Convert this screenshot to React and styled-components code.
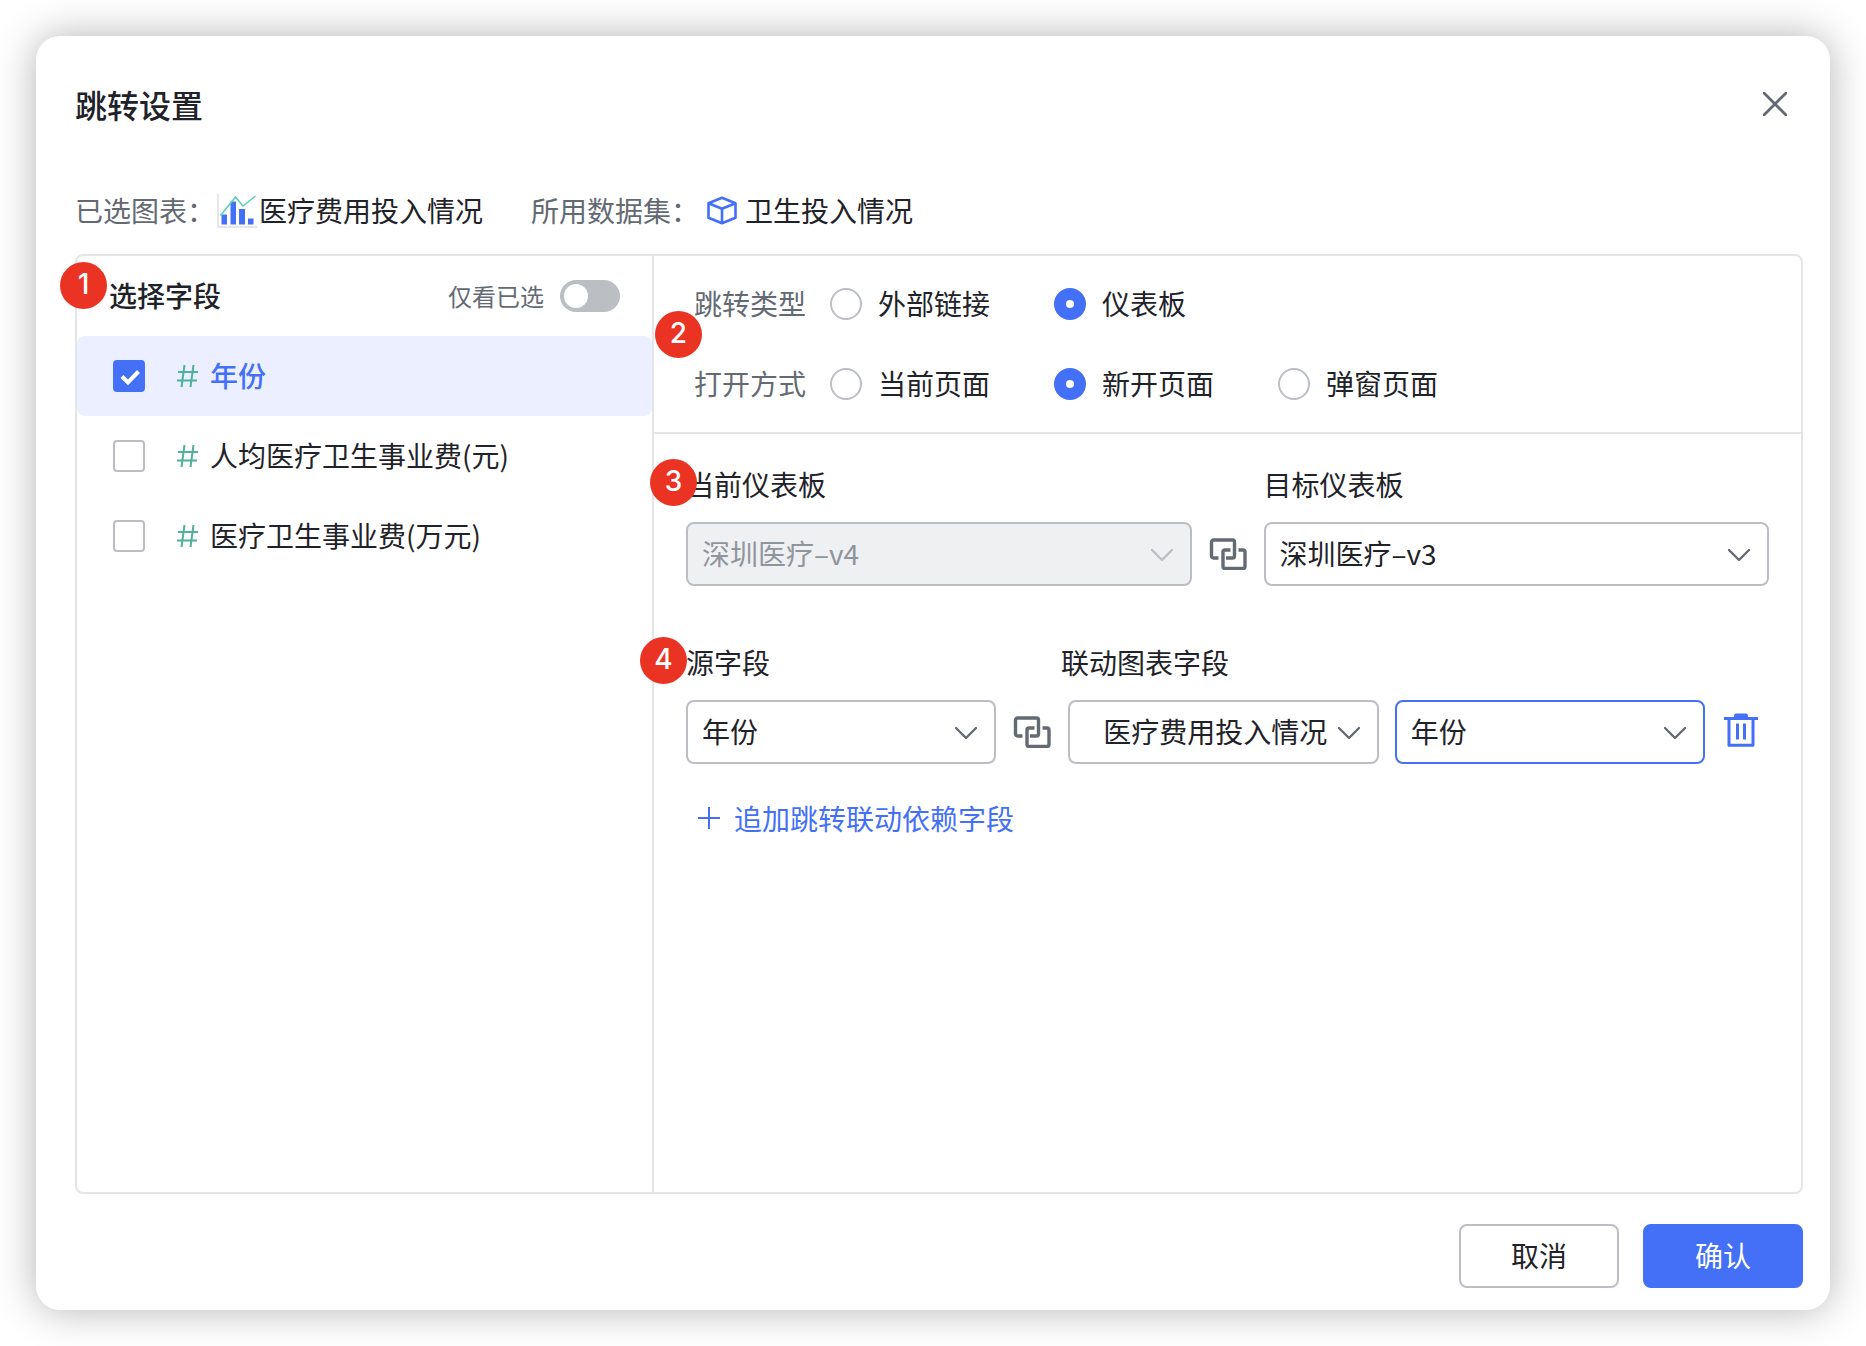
import React, { useState } from "react";
import styled, { createGlobalStyle } from "styled-components";

const fields = [
  { id: "year", name: "年份" },
  { id: "per-capita", name: "人均医疗卫生事业费(元)" },
  { id: "total", name: "医疗卫生事业费(万元)" },
];

const jumpTypes = [
  { value: "outer", label: "外部链接" },
  { value: "inner", label: "仪表板" },
];

const openModes = [
  { value: "self", label: "当前页面" },
  { value: "blank", label: "新开页面" },
  { value: "popup", label: "弹窗页面" },
];

export default function App() {
  const [checked, setChecked] = useState(["year"]);
  const [onlyChecked, setOnlyChecked] = useState(false);
  const [jumpType, setJumpType] = useState("inner");
  const [openMode, setOpenMode] = useState("blank");

  const toggleField = (id) => {
    setChecked(
      checked.includes(id) ? checked.filter((c) => c !== id) : [...checked, id]
    );
  };

  const shown = onlyChecked
    ? fields.filter((f) => checked.includes(f.id))
    : fields;

  return (
    <>
      <GlobalStyle />
      <Page>
        <Dialog role="dialog" aria-labelledby="dialog-title">
          <Header>
            <Title id="dialog-title">跳转设置</Title>
            <CloseButton type="button" aria-label="关闭">
              <CloseIcon />
            </CloseButton>
          </Header>

          <Info>
            <InfoItem>
              <InfoLabel>已选图表：</InfoLabel>
              <ChartIcon />
              <span>医疗费用投入情况</span>
            </InfoItem>
            <InfoItem $gap={7}>
              <InfoLabel>所用数据集：</InfoLabel>
              <CubeIcon />
              <span>卫生投入情况</span>
            </InfoItem>
          </Info>

          <Panel>
            <FieldColumn>
              <Badge $left={-17} $top={6}>1</Badge>
              <FieldHeader>
                <FieldTitle>选择字段</FieldTitle>
                <SwitchLabel>
                  仅看已选
                  <Switch
                    type="checkbox"
                    role="switch"
                    checked={onlyChecked}
                    onChange={() => setOnlyChecked(!onlyChecked)}
                  />
                </SwitchLabel>
              </FieldHeader>
              {shown.map((f) => (
                <FieldRow key={f.id} $active={checked.includes(f.id)}>
                  <CheckWrap>
                    <Checkbox
                      type="checkbox"
                      checked={checked.includes(f.id)}
                      onChange={() => toggleField(f.id)}
                    />
                    {checked.includes(f.id) && <CheckIcon />}
                  </CheckWrap>
                  <HashIcon />
                  <Text>{f.name}</Text>
                </FieldRow>
              ))}
            </FieldColumn>

            <Settings>
              <RadioSection>
                <Badge $left={1} $top={55}>2</Badge>
                <RadioRow role="radiogroup" aria-label="跳转类型">
                  <RadioTitle>跳转类型</RadioTitle>
                  {jumpTypes.map((t) => (
                    <RadioLabel key={t.value}>
                      <Radio
                        type="radio"
                        name="jumpType"
                        checked={jumpType === t.value}
                        onChange={() => setJumpType(t.value)}
                      />
                      <Text>{t.label}</Text>
                    </RadioLabel>
                  ))}
                </RadioRow>
                <RadioRow role="radiogroup" aria-label="打开方式">
                  <RadioTitle>打开方式</RadioTitle>
                  {openModes.map((m) => (
                    <RadioLabel key={m.value}>
                      <Radio
                        type="radio"
                        name="openMode"
                        checked={openMode === m.value}
                        onChange={() => setOpenMode(m.value)}
                      />
                      <Text>{m.label}</Text>
                    </RadioLabel>
                  ))}
                </RadioRow>
              </RadioSection>

              <Mapping>
                <Badge $left={-4} $top={25}>3</Badge>
                <MapRow>
                  <Field>
                    <Label htmlFor="current">当前仪表板</Label>
                    <Select id="current" options={["深圳医疗–v4"]} disabled />
                  </Field>
                  <LinkSlot>
                    <LinkIcon />
                  </LinkSlot>
                  <Field>
                    <Label htmlFor="target">目标仪表板</Label>
                    <Select id="target" options={["深圳医疗–v3"]} />
                  </Field>
                </MapRow>
              </Mapping>

              <Mapping>
                <Badge $left={-14} $top={51}>4</Badge>
                <LabelRow>
                  <Label htmlFor="source">源字段</Label>
                  <Label htmlFor="chart">联动图表字段</Label>
                </LabelRow>
                <MapRow>
                  <Field>
                    <Select id="source" options={["年份"]} />
                  </Field>
                  <LinkSlot>
                    <LinkIcon />
                  </LinkSlot>
                  <Field>
                    <Select id="chart" options={["医疗费用投入情况"]} indent />
                  </Field>
                  <Spacer />
                  <Field>
                    <Select
                      id="chart-field"
                      aria-label="联动字段"
                      options={["年份"]}
                      active
                    />
                  </Field>
                  <DeleteButton type="button" aria-label="删除">
                    <TrashIcon />
                  </DeleteButton>
                </MapRow>
                <AddButton type="button">
                  <PlusIcon />
                  追加跳转联动依赖字段
                </AddButton>
              </Mapping>
            </Settings>
          </Panel>

          <Footer>
            <Button type="button">取消</Button>
            <Button type="button" $primary>
              确认
            </Button>
          </Footer>
        </Dialog>
      </Page>
    </>
  );
}

function Select({ options, indent, active, ...rest }) {
  return (
    <SelectWrap>
      <StyledSelect $indent={indent} $active={active} {...rest}>
        {options.map((o) => (
          <option key={o}>{o}</option>
        ))}
      </StyledSelect>
      <Chevron viewBox="0 0 22 12" $disabled={rest.disabled}>
        <path d="M1 1l10 10L21 1" />
      </Chevron>
    </SelectWrap>
  );
}

/// Icons ///
const CloseIcon = () => (
  <svg width="24" height="24" viewBox="0 0 24 24" fill="none">
    <path
      d="M1 1l22 22M23 1L1 23"
      stroke="#646a73"
      strokeWidth="2.8"
      strokeLinecap="round"
    />
  </svg>
);

const ChartIcon = () => (
  <svg width="40" height="36" viewBox="0 0 40 36" fill="none">
    <path d="M1 2v33h39" stroke="#dee0e3" strokeWidth="1.6" />
    <path
      d="M4.500 22.500h5.500v10h-5.500zM13.500 9.500h5.500v23h-5.500zM22 17h6v15.500h-6zM31 26.500h5.500v6h-5.500z"
      fill="#4370f6"
    />
    <path
      d="M3.500 23.500L18.500 5l7.500 9L38.500 4"
      stroke="#5ad0b2"
      strokeWidth="1.6"
    />
  </svg>
);

const CubeIcon = () => (
  <svg width="32" height="30" viewBox="-1 -1 32 30" fill="none">
    <path
      d="M15 1.700l13.500 5.500v14.500L15 27.300 1.500 21.700V7.200zM1.500 7.200L15 12.800l13.500-5.600M15 12.800v14.500"
      stroke="#4370f6"
      strokeWidth="2.600"
      strokeLinejoin="round"
    />
  </svg>
);

const HashIcon = () => (
  <svg width="22" height="24" viewBox="0 0 22 24" fill="none">
    <path
      d="M8.500 1L5.500 23M17.500 1L14.500 23M2 8h20M1 16.500h20"
      stroke="#4fb09c"
      strokeWidth="2"
    />
  </svg>
);

const CheckIcon = () => (
  <svg width="32" height="32" viewBox="0 0 32 32" fill="none">
    <path d="M9 16.500l6 6L25.500 11.500" stroke="#fff" strokeWidth="4" />
  </svg>
);

const LinkIcon = () => (
  <svg width="38" height="32" viewBox="0 0 38 32" fill="none">
    <g stroke="#646a73" strokeWidth="3.4" strokeLinejoin="round">
      <path d="M9.500 20H4.500a2 2 0 0 1-2-2V4a2 2 0 0 1 2-2h19a2 2 0 0 1 2 2v14a2 2 0 0 1-2 2H17" />
      <path d="M21.500 12H16a2 2 0 0 0-2 2v14.500a2 2 0 0 0 2 2h18a2 2 0 0 0 2-2V14a2 2 0 0 0-2-2h-4.500" />
    </g>
  </svg>
);

const TrashIcon = () => (
  <svg width="34" height="34" viewBox="0 0 34 34" fill="none">
    <path
      d="M10 5V2.500a2 2 0 0 1 2-2h10a2 2 0 0 1 2 2V5z"
      fill="#4370f6"
    />
    <path
      d="M0 5.500h34M5 6v26.300h24V6"
      stroke="#4370f6"
      strokeWidth="3"
      strokeLinejoin="round"
    />
    <path d="M13.500 10.500v16M20.500 10.500v16" stroke="#4370f6" strokeWidth="3" />
  </svg>
);

const PlusIcon = () => (
  <svg width="22" height="22" viewBox="0 0 22 22" fill="none">
    <path d="M11 0v22M0 11h22" stroke="#4370f6" strokeWidth="2" />
  </svg>
);

const GlobalStyle = createGlobalStyle`
  * {
    box-sizing: border-box;
  }

  body {
    margin: 0;
    background: #fff;
  }

  body, button, input, select {
    font-family: "Noto Sans CJK SC", sans-serif;
    font-size: 28px;
    line-height: 40px;
    color: #1f2329;
  }
`;

const Page = styled.div`
  display: flex;
  min-height: 100vh;
  padding: 36px;
`;

const Dialog = styled.main`
  flex: 1;
  min-width: 0;
  display: flex;
  flex-direction: column;
  padding: 44px 27px 22px 39px;
  border-radius: 24px;
  background: #fff;
  box-shadow: 0 0 40px rgba(0, 0, 0, 0.3);
`;

const Header = styled.header`
  display: flex;
  align-items: center;
  justify-content: space-between;
`;

const Title = styled.h1`
  margin: 0;
  font-size: 32px;
  font-weight: 500;
  line-height: 48px;
`;

const CloseButton = styled.button`
  display: flex;
  padding: 8px;
  margin-right: 8px;
  border: none;
  background: none;
  cursor: pointer;
`;

const Info = styled.div`
  display: flex;
  gap: 48px;
  margin: 62px 0 24px;
`;

const InfoItem = styled.div`
  display: flex;
  align-items: center;
  gap: ${(props) => props.$gap || 2}px;
`;

const InfoLabel = styled.span`
  color: #646a73;
`;

const Panel = styled.section`
  flex: 1;
  display: flex;
  border: 2px solid #e4e5e6;
  border-radius: 8px;
`;

const Badge = styled.span`
  position: absolute;
  left: ${(props) => props.$left}px;
  top: ${(props) => props.$top}px;
  z-index: 1;
  width: 47px;
  height: 47px;
  border-radius: 50%;
  background: #ea3323;
  color: #fff;
  font-family: Inter, sans-serif;
  font-size: 28px;
  font-weight: 500;
  line-height: 44px;
  text-align: center;
`;

const FieldColumn = styled.div`
  position: relative;
  flex: 0 0 577px;
  border-right: 2px solid #e4e5e6;
`;

const FieldHeader = styled.div`
  display: flex;
  align-items: center;
  justify-content: space-between;
  height: 80px;
  padding: 0 32px;
`;

const FieldTitle = styled.h2`
  margin: 0;
  padding-bottom: 2px;
  font-size: 28px;
  font-weight: 500;
`;

const SwitchLabel = styled.label`
  display: flex;
  align-items: center;
  gap: 16px;
  font-size: 24px;
  color: #646a73;
`;

const Switch = styled.input`
  appearance: none;
  width: 60px;
  height: 32px;
  margin: 0;
  padding: 4px;
  border-radius: 16px;
  background: ${(props) => (props.checked ? "#4370f6" : "#bbbfc4")};
  cursor: pointer;

  &::before {
    content: "";
    display: block;
    width: 24px;
    height: 24px;
    margin-left: ${(props) => (props.checked ? 28 : 0)}px;
    border-radius: 50%;
    background: #fff;
  }
`;

const FieldRow = styled.label`
  display: flex;
  align-items: center;
  height: 80px;
  padding: 0 36px;
  border-radius: 8px;
  cursor: pointer;
  background: ${(props) => (props.$active ? "#ebefff" : "transparent")};
  color: ${(props) => (props.$active ? "#4370f6" : "#1f2329")};
  font-weight: ${(props) => (props.$active ? 500 : 400)};

  > svg {
    margin: 0 12px 0 31px;
  }
`;

/* optical centring next to checkboxes and radios */
const Text = styled.span`
  padding-bottom: 2px;
`;

const CheckWrap = styled.span`
  display: grid;

  > * {
    grid-area: 1 / 1;
  }

  > svg {
    pointer-events: none;
  }
`;

const Checkbox = styled.input`
  appearance: none;
  width: 32px;
  height: 32px;
  margin: 0;
  border: 2px solid ${(props) => (props.checked ? "#4370f6" : "#bbbfc4")};
  border-radius: 4px;
  background: ${(props) => (props.checked ? "#4370f6" : "#fff")};
`;

const Settings = styled.div`
  flex: 1;
  min-width: 0;
`;

const RadioSection = styled.div`
  position: relative;
  padding: 8px 40px;
  border-bottom: 2px solid #e4e5e6;
`;

const RadioRow = styled.div`
  display: flex;
  align-items: center;
  gap: 64px;
  height: 80px;
`;

const RadioTitle = styled(Text)`
  margin-right: -40px;
  color: #646a73;
`;

const RadioLabel = styled.label`
  display: flex;
  align-items: center;
  gap: 16px;
  cursor: pointer;
`;

const Radio = styled.input`
  appearance: none;
  display: grid;
  place-items: center;
  width: 32px;
  height: 32px;
  margin: 0;
  border: 2px solid ${(props) => (props.checked ? "#4370f6" : "#bbbfc4")};
  border-radius: 50%;
  background: ${(props) => (props.checked ? "#4370f6" : "#fff")};

  &::before {
    content: "";
    width: 8px;
    height: 8px;
    border-radius: 50%;
    background: #fff;
  }
`;

const Mapping = styled.div`
  position: relative;
  padding: 30px 32px 0;

  & + & {
    padding-top: 56px;
  }
`;

const MapRow = styled.div`
  display: flex;
  align-items: flex-end;
`;

const LabelRow = styled.div`
  display: grid;
  grid-template-columns: 9fr 17fr;
`;

const Field = styled.div`
  flex: 1 1 0;
  min-width: 0;
`;

const Label = styled.label`
  display: block;
  margin-bottom: 18px;
`;

const LinkSlot = styled.div`
  display: flex;
  flex: none;
  align-items: center;
  justify-content: center;
  width: 72px;
  height: 64px;
`;

const Spacer = styled.div`
  width: 16px;
`;

const SelectWrap = styled.div`
  position: relative;
`;

const StyledSelect = styled.select`
  appearance: none;
  display: block;
  width: 100%;
  height: 64px;
  padding: 0 46px 2px ${(props) => (props.$indent ? 33 : 14)}px;
  border: 2px solid ${(props) => (props.$active ? "#4370f6" : "#bbbfc4")};
  border-radius: 8px;
  background: #fff;

  &:disabled {
    background: #eff0f1;
    color: #8f959e;
    opacity: 1;
  }
`;

const Chevron = styled.svg`
  position: absolute;
  right: 19px;
  top: 27px;
  width: 22px;
  height: 12px;
  fill: none;
  stroke: ${(props) => (props.$disabled ? "#bbbfc4" : "#646a73")};
  stroke-width: 2.4;
  stroke-linecap: round;
  stroke-linejoin: round;
  pointer-events: none;
`;

const DeleteButton = styled.button`
  display: flex;
  flex: none;
  align-items: center;
  justify-content: center;
  width: 64px;
  height: 64px;
  padding: 0 0 4px 8px;
  border: none;
  background: none;
  cursor: pointer;
`;

const AddButton = styled.button`
  display: flex;
  align-items: center;
  gap: 14px;
  margin-top: 34px;
  padding: 0 12px;
  border: none;
  background: none;
  color: #4370f6;
  cursor: pointer;
`;

const Footer = styled.footer`
  display: flex;
  justify-content: flex-end;
  gap: 24px;
  margin-top: 30px;
`;

const Button = styled.button`
  width: 160px;
  height: 64px;
  padding: 0 0 2px;
  border: 2px solid ${(props) => (props.$primary ? "#4370f6" : "#bbbfc4")};
  border-radius: 8px;
  background: ${(props) => (props.$primary ? "#4370f6" : "#fff")};
  color: ${(props) => (props.$primary ? "#fff" : "#1f2329")};
  cursor: pointer;
`;
